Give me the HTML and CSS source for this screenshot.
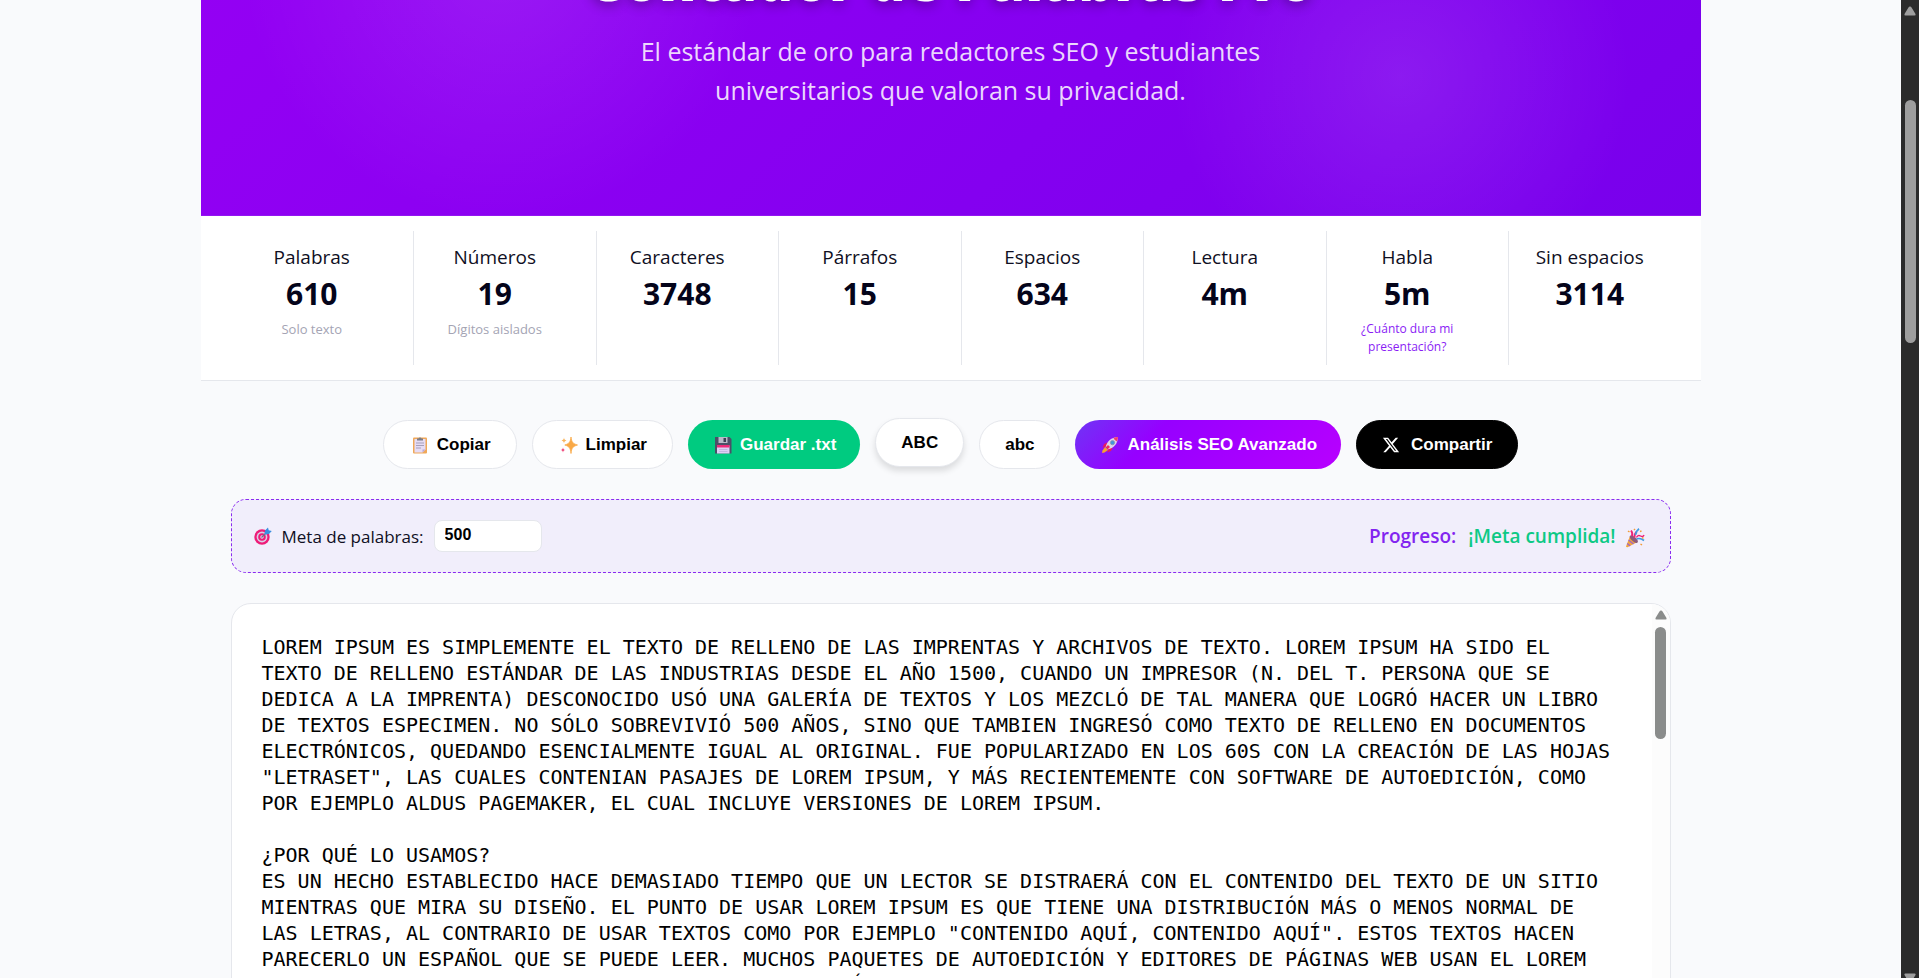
FILE: index.html
```html
<!DOCTYPE html>
<html lang="es">
<head>
<meta charset="utf-8">
<meta name="viewport" content="width=device-width, initial-scale=1">
<title>Contador de Palabras Pro</title>
<link rel="stylesheet" href="styles.css">
</head>
<body>
<div class="viewport">
  <main class="page">
    <header class="hero">
      <h1 class="hero-title">Contador de Palabras Pro</h1>
      <p class="hero-text">El estándar de oro para redactores SEO y estudiantes universitarios que valoran su privacidad.</p>
    </header>

    <section class="stats" aria-label="Estadísticas">
      <div class="stat"><span class="stat-label">Palabras</span><strong class="stat-value">610</strong><small class="stat-note">Solo texto</small></div>
      <div class="stat"><span class="stat-label">Números</span><strong class="stat-value">19</strong><small class="stat-note">Dígitos aislados</small></div>
      <div class="stat"><span class="stat-label">Caracteres</span><strong class="stat-value">3748</strong></div>
      <div class="stat"><span class="stat-label">Párrafos</span><strong class="stat-value">15</strong></div>
      <div class="stat"><span class="stat-label">Espacios</span><strong class="stat-value">634</strong></div>
      <div class="stat"><span class="stat-label">Lectura</span><strong class="stat-value">4m</strong></div>
      <div class="stat"><span class="stat-label">Habla</span><strong class="stat-value">5m</strong><a class="stat-link" href="#presentacion">¿Cuánto dura mi presentación?</a></div>
      <div class="stat"><span class="stat-label">Sin espacios</span><strong class="stat-value">3114</strong></div>
    </section>

    <div class="toolbar">
      <button class="btn" type="button">
        <svg class="icon icon-btn" viewBox="0 0 18 18" aria-hidden="true"><rect x="2" y="1.5" width="14" height="16" rx="1" fill="#f0a858"/><path d="M3.500 3h11v10.500L11.500 16.500h-8z" fill="#e6dcf5"/><path d="M14.500 13.500L11.500 16.500v-3z" fill="#b9a8d6"/><path d="M6 4.500V2.500h1.500a1.600 1.600 0 0 1 3 0H12v2z" fill="#7d7d86"/><path d="M5 7h8M5 9.500h8M5 12h5" stroke="#a7a0bb" stroke-width="1"/></svg>
        Copiar
      </button>
      <button class="btn" type="button">
        <svg class="icon icon-btn" viewBox="0 0 18 18" aria-hidden="true"><path d="M11 1C11.700 6 12.500 7.500 17.500 9C12.500 10.500 11.700 12 11 17.500C10.300 12 9.500 10.500 4.800 9C9.500 7.500 10.300 6 11 1z" fill="#f9a947" stroke="#f9a947" stroke-width=".8"/><path d="M4 1.500C4.300 3.600 4.700 4 6.500 4.500C4.700 5 4.300 5.400 4 7.500C3.700 5.400 3.300 5 1.500 4.500C3.300 4 3.700 3.600 4 1.500z" fill="#f9b45c"/><path d="M3 11.500C3.300 13.300 3.700 13.700 5.300 14C3.700 14.400 3.300 14.800 3 16.500C2.700 14.800 2.300 14.400.6 14C2.300 13.700 2.700 13.300 3 11.500z" fill="#ee3b72"/></svg>
        Limpiar
      </button>
      <button class="btn btn-save" type="button">
        <svg class="icon icon-btn" viewBox="0 0 18 18" aria-hidden="true"><path d="M1 1h14.500L17.500 3v14.500H1z" fill="#4b5068"/><rect x="4.500" y="1" width="9" height="6" fill="#b8bac8"/><rect x="9.500" y="2" width="2.500" height="4" fill="#3c4054"/><rect x="3" y="9.500" width="12.500" height="8" fill="#ddd0f4"/><rect x="3" y="9" width="12.500" height="2.500" fill="#ee2a78"/><path d="M5 13.500h8.500M5 15.500h8.500" stroke="#bcaedb" stroke-width=".8"/></svg>
        Guardar .txt
      </button>
      <button class="btn btn-raised" type="button">ABC</button>
      <button class="btn" type="button">abc</button>
      <button class="btn btn-seo" type="button">
        <svg class="icon icon-btn" viewBox="0 0 18 18" aria-hidden="true"><path d="M6 6.500L3 8l-1.500 4L6 10zM11.500 12L10 15l-4 1.500L8 12z" fill="#e8185f"/><path d="M4 11L1.500 14.500L1 17l2.500-.5L7 14z" fill="#f7a32b"/><path d="M4.500 11.500C6 5 10 1.500 17 1C16.500 8 13 12 6.500 13.500z" fill="#dcd5ec"/><path d="M12.500 1.900Q14.500 1.200 17 1Q16.800 3.500 16 5.500Q13.500 4.500 12.500 1.900z" fill="#f03a6f"/><path d="M4.500 11.500L7 9l2 2-2.500 2.500z" fill="#ee2a5d"/><circle cx="11.500" cy="6.700" r="2.100" fill="#4194de" stroke="#8790aa" stroke-width=".8"/></svg>
        Análisis SEO Avanzado
      </button>
      <button class="btn btn-share" type="button">
        <svg class="icon" viewBox="0 0 24 24" aria-hidden="true"><path d="M18.244 2.250h3.308l-7.227 8.260 8.502 11.240H16.170l-5.214-6.817L4.990 21.750H1.680l7.730-8.835L1.254 2.250H8.080l4.713 6.231zm-1.161 17.520h1.833L7.084 4.126H5.117z" fill="#fff"/></svg>
        Compartir
      </button>
    </div>

    <section class="goal">
      <div class="goal-field">
        <svg class="icon" viewBox="0 0 18 18" aria-hidden="true"><circle cx="8" cy="10" r="7.700" fill="#ee1b78"/><circle cx="8" cy="10" r="5.400" fill="#d9cfe6"/><circle cx="8" cy="10" r="3.800" fill="#ee1b78"/><circle cx="8" cy="10" r="1.700" fill="#e6dcf0"/><path d="M7.500 10.500L13 5" stroke="#6d6f86" stroke-width="1.200"/><path d="M10.500 7.500l.5-4L14 .5l.7 2.800L17.800 4 15 7z" fill="#3a8ee0"/></svg>
        <label for="goal">Meta de palabras:</label>
        <input class="goal-input" id="goal" type="text" inputmode="numeric" value="500">
      </div>
      <p class="goal-status">Progreso: <span class="goal-done">¡Meta cumplida!
        <svg class="icon icon-party" viewBox="0 0 20 20" aria-hidden="true"><path d="M5 8L1 18.500q.2 1 1.500.8L12.500 14z" fill="#f2a53c"/><path d="M3.500 12l5 4M2.200 15.500l3 2.500" stroke="#a065c8" stroke-width="1.300"/><ellipse cx="8.800" cy="11.200" rx="2.200" ry="5" transform="rotate(-48 8.800 11.200)" fill="#8b5a7c"/><path d="M7 8Q8 5 6 2.500M9.500 9.500Q9.500 5 12 4" fill="none" stroke="#ee2076" stroke-width="1.900"/><path d="M10.500 7Q11 3 14 .8M11.500 11Q15 9.500 19 12.500" fill="none" stroke="#3f9be3" stroke-width="1.700"/><path d="M11.500 9.500Q13 6.500 15.500 8T19 7" fill="none" stroke="#ee2076" stroke-width="1.400"/><path d="M3 3l1.500 1M15 3.500l1.500-.5M15.500 16l1.500 1M9 1l1 1M17 10h1.500" stroke="#f29a35" stroke-width="1.500"/></svg></span>
      </p>
    </section>

    <div class="editor">
      <textarea class="editor-text" aria-label="Texto" spellcheck="false">LOREM IPSUM ES SIMPLEMENTE EL TEXTO DE RELLENO DE LAS IMPRENTAS Y ARCHIVOS DE TEXTO. LOREM IPSUM HA SIDO EL TEXTO DE RELLENO ESTÁNDAR DE LAS INDUSTRIAS DESDE EL AÑO 1500, CUANDO UN IMPRESOR (N. DEL T. PERSONA QUE SE DEDICA A LA IMPRENTA) DESCONOCIDO USÓ UNA GALERÍA DE TEXTOS Y LOS MEZCLÓ DE TAL MANERA QUE LOGRÓ HACER UN LIBRO DE TEXTOS ESPECIMEN. NO SÓLO SOBREVIVIÓ 500 AÑOS, SINO QUE TAMBIEN INGRESÓ COMO TEXTO DE RELLENO EN DOCUMENTOS ELECTRÓNICOS, QUEDANDO ESENCIALMENTE IGUAL AL ORIGINAL. FUE POPULARIZADO EN LOS 60S CON LA CREACIÓN DE LAS HOJAS "LETRASET", LAS CUALES CONTENIAN PASAJES DE LOREM IPSUM, Y MÁS RECIENTEMENTE CON SOFTWARE DE AUTOEDICIÓN, COMO POR EJEMPLO ALDUS PAGEMAKER, EL CUAL INCLUYE VERSIONES DE LOREM IPSUM.

¿POR QUÉ LO USAMOS?
ES UN HECHO ESTABLECIDO HACE DEMASIADO TIEMPO QUE UN LECTOR SE DISTRAERÁ CON EL CONTENIDO DEL TEXTO DE UN SITIO MIENTRAS QUE MIRA SU DISEÑO. EL PUNTO DE USAR LOREM IPSUM ES QUE TIENE UNA DISTRIBUCIÓN MÁS O MENOS NORMAL DE LAS LETRAS, AL CONTRARIO DE USAR TEXTOS COMO POR EJEMPLO "CONTENIDO AQUÍ, CONTENIDO AQUÍ". ESTOS TEXTOS HACEN PARECERLO UN ESPAÑOL QUE SE PUEDE LEER. MUCHOS PAQUETES DE AUTOEDICIÓN Y EDITORES DE PÁGINAS WEB USAN EL LOREM IPSUM COMO SU TEXTO POR DEFECTO, Y AL HACER UNA BÚSQUEDA DE "LOREM IPSUM" VA A DAR POR RESULTADO MUCHOS SITIOS</textarea>
      <div class="editor-scroll" aria-hidden="true">
        <svg class="arrow" viewBox="0 0 12 10"><path d="M6 .5Q7 .5 7.700 1.700L11.500 8Q12 9.500 10.500 9.500H1.500Q0 9.500.5 8L4.300 1.700Q5 .5 6 .5z"/></svg>
        <span class="editor-thumb"></span>
      </div>
    </div>
  </main>

  <div class="window-scroll" aria-hidden="true">
    <svg class="arrow" viewBox="0 0 12 10"><path d="M6 .5Q7 .5 7.700 1.700L11.500 8Q12 9.500 10.500 9.500H1.500Q0 9.500.5 8L4.300 1.700Q5 .5 6 .5z"/></svg>
    <span class="window-thumb"></span>
    <svg class="arrow arrow-down" viewBox="0 0 12 10"><path d="M6 9.500Q7 9.500 7.700 8.300L11.500 2Q12 .5 10.500 .5H1.500Q0 .5.5 2L4.300 8.300Q5 9.500 6 9.500z"/></svg>
  </div>
</div>
</body>
</html>
```
FILE: styles.css
```css
* {
  box-sizing: border-box;
}

body {
  margin: 0;
  background: #f9fafc;
  color: #0f0f23;
  font-family: "Open Sans", "Noto Sans", sans-serif;
  font-size: 17px;
}

.viewport {
  display: flex;
  height: 100vh;
  overflow: hidden;
}

.page {
  flex: 0 1 1500px;
  min-width: 0;
  margin: -150px auto 0;
}

.hero {
  padding: 97px 30px 105px;
  border-bottom: 1px solid #9216f0;
  background:
    radial-gradient(circle at 20% 30%, rgba(255, 255, 255, 0.1), transparent 260px),
    radial-gradient(circle at 80% 62%, rgba(255, 255, 255, 0.1), transparent 230px),
    linear-gradient(135deg, #9600f4, #8400f0 60%, #7800ec);
  color: #fff;
  text-align: center;
}

.hero-title {
  margin: 0 0 21px;
  font-family: "Noto Sans", sans-serif;
  font-size: 56px;
  font-weight: 900;
  line-height: 64px;
  text-shadow: 0 4px 12px rgba(0, 0, 0, 0.3);
}

.hero-text {
  max-width: 700px;
  margin: 0 auto;
  color: rgba(255, 255, 255, 0.85);
  font-size: 25px;
  line-height: 39px;
}

.stats {
  display: grid;
  grid-template-columns: repeat(8, minmax(0, 1fr));
  gap: 20px;
  padding: 15px 30px;
  border-bottom: 1px solid #e5e7ec;
  background: #fff;
}

.stat {
  display: flex;
  flex-direction: column;
  align-items: center;
  min-height: 134px;
  padding: 11px 15px 7px;
  text-align: center;
}

.stat + .stat {
  border-left: 1px solid #e5e7ec;
}

.stat-label {
  font-size: 19px;
  line-height: 30px;
}

.stat-value {
  color: #04041a;
  font-size: 30px;
  font-weight: 700;
  line-height: 44px;
}

.stat-note,
.stat-link {
  margin-top: 4px;
  line-height: 18px;
}

.stat-note {
  color: #a4a4b4;
  font-size: 13px;
}

.stat-link {
  color: #8a1cf5;
  font-size: 12px;
  text-decoration: none;
}

.toolbar {
  display: flex;
  justify-content: center;
  gap: 15px;
  margin: 39px 30px 30px;
}

.btn {
  display: flex;
  align-items: center;
  gap: 6px;
  height: 49px;
  padding: 0 25px;
  border: 1px solid #e5e7ec;
  border-radius: 25px;
  background: #fff;
  color: #000;
  font-family: "Liberation Sans", Arial, sans-serif;
  font-size: 17px;
  font-weight: 700;
}

.btn-save,
.btn-seo {
  padding: 0 24px;
  border: 0;
  color: #fff;
}

.btn-save {
  background: #00cb80;
}

.btn-seo {
  background: linear-gradient(135deg, #6f35f5, #9600ff 30%, #b800ff);
}

.btn-share {
  gap: 11px;
  border-color: #000;
  background: #000;
  color: #fff;
}

.btn-raised {
  transform: translateY(-2px);
  box-shadow: 0 4px 6px rgba(0, 0, 0, 0.12);
}

.icon {
  flex: none;
  width: 18px;
  height: 18px;
}

.icon-btn {
  width: 22px;
}

.goal {
  display: flex;
  justify-content: space-between;
  align-items: center;
  min-height: 74px;
  margin: 0 30px 30px;
  padding: 0 25px 0 22px;
  border: 1px dashed #8a2bf0;
  border-radius: 15px;
  background: #f1eefb;
}

.goal-field {
  display: flex;
  align-items: center;
  gap: 10px;
}

.goal-input {
  width: 108px;
  height: 32px;
  padding: 0 10px 2px;
  border: 1px solid #e5e7ec;
  border-radius: 8px;
  background: #fff;
  color: #000;
  font: 700 16px "Liberation Sans", Arial, sans-serif;
}

.goal-status {
  margin: 0;
  color: #8224f0;
  font-size: 19px;
  font-weight: 600;
}

.goal-done {
  margin-left: 7px;
  color: #0dc985;
}

.icon-party {
  width: 20px;
  height: 20px;
  margin-left: 4px;
  vertical-align: middle;
}

.editor {
  display: flex;
  height: 600px;
  margin: 0 30px;
  border: 1px solid #e5e7ec;
  border-radius: 20px;
  background: #fff;
  overflow: hidden;
}

.editor-text {
  flex: 1;
  min-width: 0;
  padding: 30px;
  border: 0;
  outline: 0;
  background: transparent;
  color: #000;
  font: 20px/26px "DejaVu Sans Mono", monospace;
  overflow: hidden;
  resize: none;
}

.editor-scroll,
.window-scroll {
  display: flex;
  flex: none;
  flex-direction: column;
  align-items: center;
  width: 18px;
}

.editor-scroll {
  padding-top: 6px;
  background: #fcfcfc;
  fill: #8a8c8b;
}

.window-scroll {
  padding-top: 6px;
  background: #2b2b2b;
  fill: #9e9e9e;
}

.arrow {
  flex: none;
  width: 12px;
  height: 10px;
}

.editor-thumb {
  width: 11px;
  height: 112px;
  margin-top: 7px;
  border-radius: 6px;
  background: #8a8c8b;
}

.window-thumb {
  width: 11px;
  height: 243px;
  margin-top: 84px;
  border-radius: 6px;
  background: #9e9e9e;
}

.arrow-down {
  margin-top: auto;
  margin-bottom: -5px;
}
```
